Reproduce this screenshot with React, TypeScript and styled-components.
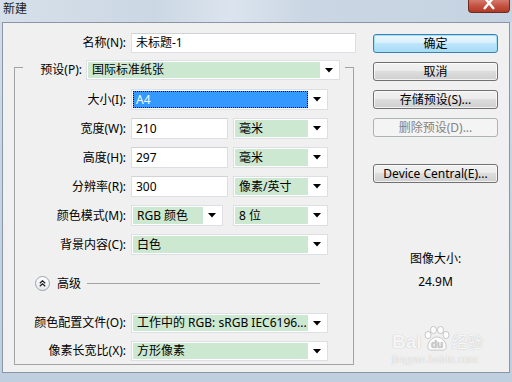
import React from "react";
import styled, { createGlobalStyle, css } from "styled-components";

const GlobalStyle = createGlobalStyle`
  html, body { margin: 0; padding: 0; }
  body {
    font-family: "Noto Sans", "Noto Sans CJK SC", sans-serif;
    font-size: 12px;
    line-height: 16px;
    color: #000;
  }
  * { box-sizing: border-box; }
`;

const Frame = styled.div`
  position: relative;
  width: 512px;
  height: 382px;
  background: linear-gradient(180deg, #d3dee9 0%, #c7d5e4 40%, #bfcfdf 100%);
  display: flex;
  flex-direction: column;
  overflow: hidden;
`;

const TitleBar = styled.div`
  height: 22px;
  display: flex;
  justify-content: space-between;
  align-items: flex-start;
  padding-left: 3px;
  background: linear-gradient(90deg, #d6e0ea 0%, #cbd7e3 30%, #dbe4ee 45%, #cad6e3 60%, #c5d3e2 100%);
`;

const Title = styled.span`
  font-size: 12px;
  line-height: 18px;
  color: #1b1b1b;
`;

const CloseButton = styled.div`
  width: 42px;
  height: 13px;
  margin-right: 2px;
  border: 1px solid #6d2a22;
  border-top: none;
  border-radius: 0 0 4px 4px;
  background: linear-gradient(180deg, #d47a6e 0%, #c4513f 50%, #b03a28 100%);
  display: flex;
  justify-content: center;
  overflow: hidden;
`;

const Window = styled.div`
  margin: 0 2px;
  height: 351px;
  border: 1px solid #8a96a3;
  background: #f0f0f0;
  display: flex;
  padding-top: 10px;
`;

const LeftCol = styled.div`
  width: 354px;
  display: flex;
  flex-direction: column;
`;

const RightCol = styled.div`
  width: 125px;
  margin-left: 16px;
  display: flex;
  flex-direction: column;
  padding-top: 1px;
`;

const Row = styled.div<{ $h?: number; $mt?: number }>`
  display: flex;
  align-items: center;
  height: ${(p) => p.$h ?? 21}px;
  margin-top: ${(p) => p.$mt ?? 0}px;
`;

const Label = styled.span<{ $w: number }>`
  width: ${(p) => p.$w}px;
  text-align: right;
  white-space: nowrap;
  margin-right: 5px;
  flex: none;
`;

const TextInput = styled.div<{ $w: number }>`
  width: ${(p) => p.$w}px;
  height: 100%;
  background: #fff;
  border: 1px solid #dcdfe3;
  border-top-color: #cfd3d8;
  padding-left: 4px;
  display: flex;
  align-items: center;
  flex: none;
`;

const SelectBox = styled.div<{ $w: number; $ml?: number }>`
  width: ${(p) => p.$w}px;
  height: 100%;
  margin-left: ${(p) => p.$ml ?? 0}px;
  background: #fff;
  border: 1px solid #dcdfe3;
  padding: 1px;
  display: flex;
  flex: none;
`;

const Fill = styled.div<{ $selected?: boolean }>`
  flex: 1;
  display: flex;
  align-items: center;
  padding-left: 4px;
  white-space: nowrap;
  overflow: hidden;
  background: #cde8d0;
  ${(p) =>
    p.$selected &&
    css`
      background: #3399ff;
      color: #fff;
      outline: 1px dotted #000;
      outline-offset: -1px;
      padding-left: 3px;
    `}
`;

const ArrowCell = styled.div`
  width: 18px;
  display: flex;
  align-items: center;
  justify-content: center;
  flex: none;
`;

const Arrow = () => (
  <svg width="8" height="5" viewBox="0 0 8 5">
    <polygon points="0,0 8,0 4,4.5" fill="#000" />
  </svg>
);

const Select = ({
  w,
  ml,
  children,
  selected,
}: {
  w: number;
  ml?: number;
  children?: React.ReactNode;
  selected?: boolean;
}) => (
  <SelectBox $w={w} $ml={ml}>
    <Fill $selected={selected}>{children}</Fill>
    <ArrowCell>
      <Arrow />
    </ArrowCell>
  </SelectBox>
);

const Group = styled.div`
  margin-top: 14px;
  margin-left: 11px;
  width: 340px;
  height: 298px;
  border: 1px solid #a3a3a3;
  display: flex;
  flex-direction: column;
`;

const Legend = styled.div`
  margin-top: -8px;
  margin-left: 8px;
  width: 322px;
  height: 20px;
  background: #f0f0f0;
  display: flex;
  align-items: center;
  padding-right: 5px;
`;

const LegendLabel = styled.span`
  width: 59px;
  text-align: right;
  margin-right: 4px;
  white-space: nowrap;
`;

const AdvRow = styled.div`
  display: flex;
  align-items: center;
  height: 15px;
  margin-top: 21px;
  padding-left: 20px;
  padding-right: 33px;
`;

const AdvCircle = styled.div`
  width: 15px;
  height: 15px;
  border-radius: 50%;
  border: 1px solid #9aa3ad;
  background: linear-gradient(180deg, #ffffff 0%, #e6e9ee 100%);
  display: flex;
  align-items: center;
  justify-content: center;
  flex: none;
`;

const AdvText = styled.span`
  margin-left: 7px;
  margin-right: 6px;
  white-space: nowrap;
`;

const AdvLine = styled.div`
  flex: 1;
  height: 1px;
  background: #a3a3a3;
`;

const Button = styled.div<{ $variant?: "default" | "disabled"; $mt?: number }>`
  height: 19px;
  width: 125px;
  margin-top: ${(p) => p.$mt ?? 0}px;
  border: 1px solid #707070;
  border-radius: 3px;
  background: linear-gradient(180deg, #f2f2f2 0%, #ebebeb 49%, #dddddd 50%, #cfcfcf 100%);
  display: flex;
  align-items: center;
  justify-content: center;
  white-space: nowrap;
  color: #000;
  box-shadow: inset 0 0 0 1px rgba(255, 255, 255, 0.7);
  ${(p) =>
    p.$variant === "default" &&
    css`
      border-color: #3c7fb1;
      background: linear-gradient(180deg, #eaf6fd 0%, #d9f0fc 49%, #bee6fd 50%, #a7d9f5 100%);
      box-shadow: inset 0 0 0 1px #9fe1f6;
    `}
  ${(p) =>
    p.$variant === "disabled" &&
    css`
      border-color: #adb2b5;
      background: #f4f4f4;
      color: #838383;
      box-shadow: none;
    `}
`;

const SizeInfo = styled.div`
  margin-top: 68px;
  display: flex;
  flex-direction: column;
  align-items: center;
  gap: 7px;
`;

const Watermark = styled.div`
  position: absolute;
  left: 392px;
  top: 326px;
  display: flex;
  flex-direction: column;
  color: rgba(255, 255, 255, 0.9);
  text-shadow: 0 0 1px rgba(120, 120, 120, 0.55);
  font-family: "Liberation Sans", "Noto Sans CJK SC", sans-serif;
  pointer-events: none;
`;

const WmTop = styled.div`
  display: flex;
  align-items: flex-end;
  font-size: 19px;
  line-height: 20px;
  font-weight: bold;
`;

const WmCn = styled.span`
  font-size: 16px;
  line-height: 18px;
  font-weight: normal;
`;

const WmSub = styled.div`
  font-size: 10px;
  line-height: 12px;
  letter-spacing: 0.3px;
  margin-top: 2px;
`;

export default function App() {
  return (
    <Frame>
      <GlobalStyle />
      <TitleBar>
        <Title>新建</Title>
        <CloseButton>
          <svg width="14" height="12" viewBox="0 0 14 12">
            <path d="M2 -3 L12 9 M12 -3 L2 9" stroke="#fff" strokeWidth="2.4" />
          </svg>
        </CloseButton>
      </TitleBar>
      <Window>
        <LeftCol>
          <Row $h={20}>
            <Label $w={123}>名称(N):</Label>
            <TextInput $w={225}>未标题-1</TextInput>
          </Row>
          <Group>
            <Legend>
              <LegendLabel>预设(P):</LegendLabel>
              <Select w={254}>国际标准纸张</Select>
            </Legend>
            <Row $mt={9}>
              <Label $w={111}>大小(I):</Label>
              <Select w={197} selected>
                A4
              </Select>
            </Row>
            <Row $mt={8}>
              <Label $w={111}>宽度(W):</Label>
              <TextInput $w={97}>210</TextInput>
              <Select w={95} ml={5}>
                毫米
              </Select>
            </Row>
            <Row $mt={8}>
              <Label $w={111}>高度(H):</Label>
              <TextInput $w={97}>297</TextInput>
              <Select w={95} ml={5}>
                毫米
              </Select>
            </Row>
            <Row $mt={8}>
              <Label $w={111}>分辨率(R):</Label>
              <TextInput $w={97}>300</TextInput>
              <Select w={95} ml={5}>
                像素/英寸
              </Select>
            </Row>
            <Row $mt={8}>
              <Label $w={111}>颜色模式(M):</Label>
              <Select w={92}>RGB 颜色</Select>
              <Select w={95} ml={10}>
                8 位
              </Select>
            </Row>
            <Row $mt={8}>
              <Label $w={111}>背景内容(C):</Label>
              <Select w={197}>白色</Select>
            </Row>
            <AdvRow>
              <AdvCircle>
                <svg width="7" height="7" viewBox="0 0 7 7">
                  <path d="M0.8 3.2 L3.5 0.8 L6.2 3.2 M0.8 6.2 L3.5 3.8 L6.2 6.2" stroke="#222" strokeWidth="1.3" fill="none" />
                </svg>
              </AdvCircle>
              <AdvText>高级</AdvText>
              <AdvLine />
            </AdvRow>
            <Row $h={20} $mt={22}>
              <Label $w={111}>颜色配置文件(O):</Label>
              <Select w={197}>工作中的 RGB: sRGB IEC6196...</Select>
            </Row>
            <Row $h={20} $mt={8}>
              <Label $w={111}>像素长宽比(X):</Label>
              <Select w={197}>方形像素</Select>
            </Row>
          </Group>
        </LeftCol>
        <RightCol>
          <Button $variant="default">确定</Button>
          <Button $mt={9}>取消</Button>
          <Button $mt={9}>存储预设(S)...</Button>
          <Button $mt={9} $variant="disabled">
            删除预设(D)...
          </Button>
          <Button $mt={27}>Device Central(E)...</Button>
          <SizeInfo>
            <span>图像大小:</span>
            <span>24.9M</span>
          </SizeInfo>
        </RightCol>
      </Window>
      <Watermark>
        <WmTop>
          <span>Bai</span>
          <svg width="30" height="26" viewBox="0 0 30 26">
            <g fill="rgba(255,255,255,0.85)" stroke="rgba(130,130,130,0.5)" strokeWidth="0.8">
              <ellipse cx="6" cy="9" rx="3" ry="3.6" />
              <ellipse cx="11.5" cy="4" rx="3" ry="3.6" />
              <ellipse cx="18.5" cy="4" rx="3" ry="3.6" />
              <ellipse cx="24" cy="9" rx="3" ry="3.6" />
              <path d="M15 11 C9 11 5 18 6 22 C7 25 11 24 15 24 C19 24 23 25 24 22 C25 18 21 11 15 11 Z" />
            </g>
            <text x="15" y="22" textAnchor="middle" fontSize="10" fontWeight="bold" fill="#c8c8c8" fontFamily="Liberation Sans, sans-serif">
              du
            </text>
          </svg>
          <WmCn>经验</WmCn>
        </WmTop>
        <WmSub>jingyan.baidu.com</WmSub>
      </Watermark>
    </Frame>
  );
}
